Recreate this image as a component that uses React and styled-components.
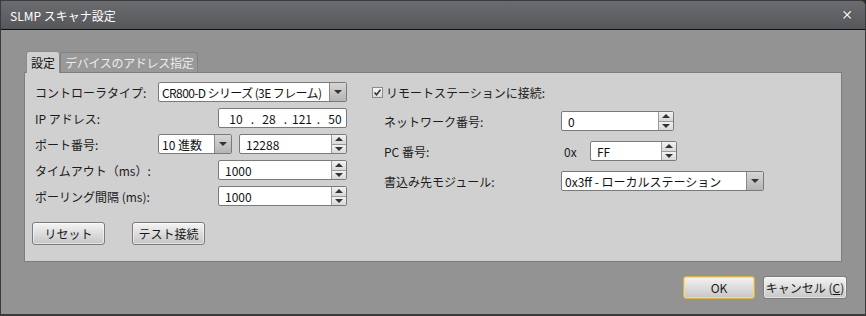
import React from 'react';
import styled, { createGlobalStyle } from 'styled-components';

const Global = createGlobalStyle`
  html, body { margin: 0; padding: 0; background: #2b2b2b; }
  body { font-family: "Noto Sans CJK JP", "Noto Sans", sans-serif; font-size: 12px; }
`;

const Window = styled.div`
  width: 866px;
  height: 316px;
  box-sizing: border-box;
  display: flex;
  flex-direction: column;
  background: #939393;
  border: 1px solid #3a3a3c;
  border-bottom-width: 2px;
  border-top-right-radius: 6px;
  overflow: hidden;
`;

const TitleBar = styled.div`
  height: 28px;
  flex: none;
  display: flex;
  align-items: center;
  justify-content: space-between;
  padding: 0 12px 0 9px;
  background: linear-gradient(#6b6c70, #56575b);
  border-bottom: 1px solid #111;
  color: #fff;
  font-size: 12px;
`;

const Close = styled.span`
  font-family: "DejaVu Sans", sans-serif;
  font-weight: bold;
  font-size: 14px;
  color: #f2f2f2;
  text-shadow: 0 0 1px #000;
`;

const Body = styled.div`
  flex: 1;
  display: flex;
  flex-direction: column;
  padding: 20px 23px 0 23px;
`;

const Tabs = styled.div`
  display: flex;
  padding-left: 2px;
  height: 22px;
  align-items: flex-end;
`;

const Tab = styled.div`
  height: ${p => (p.$active ? '22px' : '20px')};
  box-sizing: border-box;
  padding: 0 ${p => (p.$active ? 4 : 4)}px;
  display: flex;
  align-items: center;
  letter-spacing: ${p => (p.$active ? '0' : '-0.3px')};
  border: 1px solid ${p => (p.$active ? '#8a8a8a' : '#838383')};
  border-bottom: none;
  border-radius: 3px 3px 0 0;
  background: ${p => (p.$active ? '#d0d0d0' : '#999')};
  color: ${p => (p.$active ? '#111' : '#ececec')};
  margin-bottom: ${p => (p.$active ? '-1px' : '0')};
  position: relative;
  z-index: ${p => (p.$active ? 1 : 0)};
`;

const Panel = styled.div`
  height: 190px;
  box-sizing: border-box;
  background: #d0d0d0;
  border: 1px solid #7d7d7d;
  display: flex;
  padding-top: 9px;
`;

const LeftCol = styled.div`
  width: 322px;
  padding-left: 10px;
  box-sizing: border-box;
  display: flex;
  flex-direction: column;
  gap: 6px;
`;

const Row = styled.div`
  height: 20px;
  display: flex;
  align-items: center;
  justify-content: space-between;
  color: #1c1c1c;
`;

const Group = styled.div`
  display: flex;
  align-items: center;
  gap: ${p => p.$gap || 0}px;
`;

const Field = styled.div`
  width: ${p => p.$w}px;
  height: ${p => p.$h || 20}px;
  box-sizing: border-box;
  background: #fff;
  border: 1px solid #7a7a7a;
  border-radius: 2px;
  display: flex;
  align-items: stretch;
  overflow: hidden;
`;

const Value = styled.div`
  flex: 1;
  display: flex;
  align-items: center;
  padding-left: ${p => p.$pl ?? 6}px;
  letter-spacing: ${p => (p.$tight ? '-0.6px' : '0')};
  color: #111;
  white-space: nowrap;
  overflow: hidden;
`;

const DropBtn = styled.div`
  width: 16px;
  border-left: 1px solid #8a8a8a;
  background: linear-gradient(#d6d6d6, #b4b4b4);
  display: flex;
  align-items: center;
  justify-content: center;
  &::after {
    content: '';
    border-left: 4px solid transparent;
    border-right: 4px solid transparent;
    border-top: 4px solid #333;
  }
`;

const SpinBtns = styled.div`
  width: 14px;
  border-left: 1px solid #9a9a9a;
  display: flex;
  flex-direction: column;
`;

const SpinHalf = styled.div`
  flex: 1;
  display: flex;
  align-items: center;
  justify-content: center;
  background: linear-gradient(#f2f2f2, #d8d8d8);
  & + & { border-top: 1px solid #9a9a9a; }
  &::after {
    content: '';
    border-left: 4px solid transparent;
    border-right: 4px solid transparent;
    ${p => (p.$up ? 'border-bottom: 4px solid #333;' : 'border-top: 4px solid #333;')}
  }
`;

const IpRow = styled.div`
  flex: 1;
  display: flex;
  align-items: center;
  padding: 0 6px 0 6px;
  color: #111;
`;

const IpSeg = styled.span`
  width: ${p => p.$w}px;
  text-align: center;
`;

const IpDot = styled.span`
  width: 11px;
  text-align: center;
`;

const ButtonRow = styled.div`
  display: flex;
  gap: 27px;
  margin-top: 10px;
  margin-left: -3px;
`;

const Button = styled.button`
  width: ${p => p.$w || 73}px;
  height: 23px;
  box-sizing: border-box;
  font-family: inherit;
  font-size: 12px;
  color: #1a1a1a;
  padding: 0;
  border: 1px solid ${p => (p.$default ? '#d8b24a' : '#7c7c7c')};
  border-radius: 3px;
  background: linear-gradient(#f4f4f4, #c6c6c6);
  box-shadow: inset 0 0 0 1px ${p => (p.$default ? '#f1d88c' : 'rgba(255,255,255,0.5)')};
`;

const RightCol = styled.div`
  flex: 1;
  padding-left: 25px;
  display: flex;
  flex-direction: column;
`;

const CheckRow = styled.label`
  height: 20px;
  display: flex;
  align-items: center;
  gap: 3px;
  color: #1c1c1c;
`;

const Check = styled.span`
  width: 11px;
  height: 11px;
  box-sizing: border-box;
  border: 1px solid #8a8a8a;
  background: linear-gradient(#f4f4f4, #dcdcdc);
  display: flex;
  align-items: center;
  justify-content: center;
`;

const SubRow = styled.div`
  height: 20px;
  display: flex;
  align-items: center;
  margin-left: 12px;
  margin-top: ${p => p.$mt}px;
  color: #1c1c1c;
`;

const SubLabel = styled.div`
  width: 177px;
`;

const Prefix = styled.span`
  width: 26px;
  padding-left: 3px;
`;

const Footer = styled.div`
  display: flex;
  justify-content: flex-end;
  gap: 8px;
  padding-top: 14px;
  margin-right: -5px;
`;

function Spin({ w, value }) {
  return (
    <Field $w={w}>
      <Value>{value}</Value>
      <SpinBtns>
        <SpinHalf $up />
        <SpinHalf />
      </SpinBtns>
    </Field>
  );
}

function Combo({ w, value, h, tight }) {
  return (
    <Field $w={w} $h={h}>
      <Value $pl={3} $tight={tight}>{value}</Value>
      <DropBtn />
    </Field>
  );
}

export default function App() {
  return (
    <>
      <Global />
      <Window>
        <TitleBar>
          <span>SLMP スキャナ設定</span>
          <Close>✕</Close>
        </TitleBar>
        <Body>
          <Tabs>
            <Tab $active>設定</Tab>
            <Tab>デバイスのアドレス指定</Tab>
          </Tabs>
          <Panel>
            <LeftCol>
              <Row>
                <span>コントローラタイプ:</span>
                <Combo w={189} tight value="CR800-D シリーズ (3E フレーム)" />
              </Row>
              <Row>
                <span>IP アドレス:</span>
                <Field $w={129}>
                  <IpRow>
                    <IpSeg $w={22}>10</IpSeg>
                    <IpDot>.</IpDot>
                    <IpSeg $w={22}>28</IpSeg>
                    <IpDot>.</IpDot>
                    <IpSeg $w={22}>121</IpSeg>
                    <IpDot>.</IpDot>
                    <IpSeg $w={22}>50</IpSeg>
                  </IpRow>
                </Field>
              </Row>
              <Row>
                <span>ポート番号:</span>
                <Group $gap={7}>
                  <Combo w={74} value="10 進数" />
                  <Spin w={108} value="12288" />
                </Group>
              </Row>
              <Row>
                <span>タイムアウト（ms）:</span>
                <Spin w={129} value="1000" />
              </Row>
              <Row>
                <span>ポーリング間隔 (ms):</span>
                <Spin w={129} value="1000" />
              </Row>
              <ButtonRow>
                <Button>リセット</Button>
                <Button>テスト接続</Button>
              </ButtonRow>
            </LeftCol>
            <RightCol>
              <CheckRow>
                <Check>
                  <svg width="9" height="9" viewBox="0 0 9 9">
                    <path d="M1.5 4.5 L3.5 6.8 L7.5 1.8" fill="none" stroke="#333" strokeWidth="1.6" />
                  </svg>
                </Check>
                <span>リモートステーションに接続:</span>
              </CheckRow>
              <SubRow $mt={9}>
                <SubLabel>ネットワーク番号:</SubLabel>
                <Spin w={113} value="0" />
              </SubRow>
              <SubRow $mt={10}>
                <SubLabel>PC 番号:</SubLabel>
                <Prefix>0x</Prefix>
                <Spin w={87} value="FF" />
              </SubRow>
              <SubRow $mt={10}>
                <SubLabel>書込み先モジュール:</SubLabel>
                <Combo w={203} value="0x3ff - ローカルステーション" />
              </SubRow>
            </RightCol>
          </Panel>
          <Footer>
            <Button $default $w={72}>OK</Button>
            <Button $w={84}>キャンセル (<u>C</u>)</Button>
          </Footer>
        </Body>
      </Window>
    </>
  );
}
